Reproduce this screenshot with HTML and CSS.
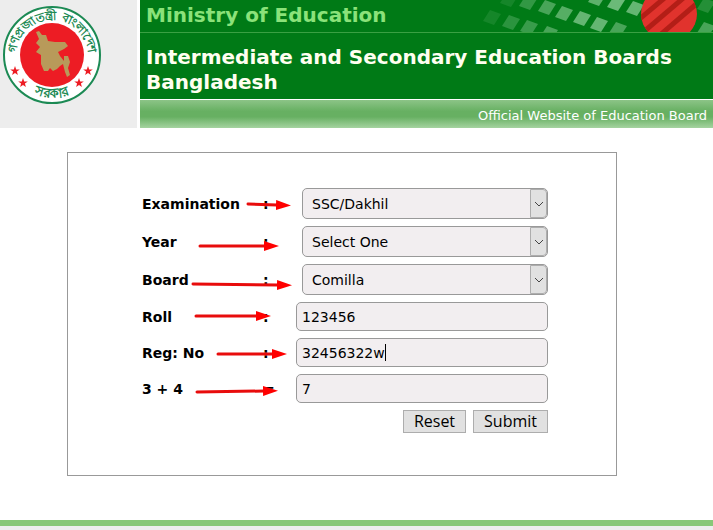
FILE: index.html
```
<!DOCTYPE html>
<html lang="en">
<head>
  <meta charset="UTF-8">
  <meta name="viewport" content="width=device-width, initial-scale=1">
  <title>Intermediate and Secondary Education Boards Bangladesh</title>
  <link rel="stylesheet" href="styles.css">
</head>
<body>

  <!-- HEADER -->
  <header class="header">
    <div class="emblem">
      <svg width="98" height="98" viewBox="0 0 98 98" role="img" aria-label="Government seal of Bangladesh">
        <defs>
          <path id="arc-top" d="M13 60 L13 50 A36 36 0 0 1 85 50 L85 60"/>
          <path id="arc-bottom" d="M14 74 A43 43 0 0 0 84 74"/>
          <path id="star" d="M0 -5 L1.2 -1.6 L4.8 -1.5 L1.9 .6 L2.9 4 L0 2 L-2.9 4 L-1.9 .6 L-4.8 -1.5 L-1.2 -1.6 Z"/>
        </defs>
        <circle cx="49" cy="49" r="48" fill="#fff" stroke="#1c8a54" stroke-width="2"/>
        <circle cx="49" cy="49" r="32" fill="#ed1c24"/>
        <path fill="#b89a5a" d="M33 26 L36 25 L39 29 L43 29 L45 35 L52 36 L62 36 L65 40 L61 43 L55 46 L57 50 L61 55 L61 50 L65 50 L67 56 L65 62 L67 69 L64 71 L62 66 L60 58 L57 60 L54 63 L50 65 L47 62 L45 65 L41 65 L38 58 L38 49 L33 46 L37 41 L33 37 L36 33 Z"/>
        <text class="emblem-text"><textPath href="#arc-top" startOffset="50%" text-anchor="middle">গণপ্রজাতন্ত্রী বাংলাদেশ</textPath></text>
        <text class="emblem-text emblem-text-large"><textPath href="#arc-bottom" startOffset="50%" text-anchor="middle">সরকার</textPath></text>
        <g fill="#ed1c24">
          <use href="#star" x="12" y="65"/>
          <use href="#star" x="20" y="77"/>
          <use href="#star" x="85" y="65"/>
          <use href="#star" x="76" y="77"/>
        </g>
      </svg>
    </div>
    <div class="banner">
      <div class="ministry">
        Ministry of Education
        <svg class="banner-art" width="250" height="32" viewBox="463 0 250 32" aria-hidden="true">
          <defs>
            <path id="tile" d="M-9 4 L-2 -7 L9 -3 L2 8 Z"/>
            <clipPath id="ball"><ellipse cx="669" cy="14" rx="28" ry="27"/></clipPath>
          </defs>
          <g fill="#8fd09a">
            <use href="#tile" x="492" y="17" opacity=".15"/>
            <use href="#tile" x="511" y="22" opacity=".3"/>
            <use href="#tile" x="529" y="27" opacity=".4"/>
            <use href="#tile" x="549" y="33" opacity=".5"/>
            <use href="#tile" x="509" y="-1" opacity=".15"/>
            <use href="#tile" x="528" y="2" opacity=".35"/>
            <use href="#tile" x="547" y="7" opacity=".5"/>
            <use href="#tile" x="564" y="13" opacity=".6"/>
            <use href="#tile" x="582" y="18" opacity=".7"/>
            <use href="#tile" x="599" y="24" opacity=".7"/>
            <use href="#tile" x="618" y="29" opacity=".5"/>
            <use href="#tile" x="597" y="-2" opacity=".65"/>
            <use href="#tile" x="616" y="3" opacity=".75"/>
            <use href="#tile" x="635" y="8" opacity=".7"/>
            <use href="#tile" x="706" y="5" opacity=".25"/>
            <use href="#tile" x="706" y="29" opacity=".5"/>
          </g>
          <g clip-path="url(#ball)">
            <rect x="640" y="-14" width="58" height="56" fill="#e2342e"/>
            <g stroke="#a81a12" stroke-width="5" opacity=".8">
              <path d="M636 22 L680 -15"/>
              <path d="M640 35 L694 -11"/>
              <path d="M660 35 L708 -6"/>
            </g>
          </g>
        </svg>
      </div>
      <h1 class="site-title">Intermediate and Secondary Education Boards Bangladesh</h1>
      <p class="tagline">Official Website of Education Board</p>
    </div>
  </header>

  <!-- RESULT FORM -->
  <main>
    <form class="result-form" action="#" method="post">
      <div class="form-row">
        <label for="exam">Examination</label>
        <span class="sep">:</span>
        <div class="select-box">
          <select id="exam" name="exam"><option>SSC/Dakhil</option></select>
          <span class="select-arrow"><svg width="10" height="6" viewBox="0 0 10 6"><path d="M1 1 L5 5 L9 1"/></svg></span>
        </div>
      </div>
      <div class="form-row">
        <label for="year">Year</label>
        <span class="sep">:</span>
        <div class="select-box">
          <select id="year" name="year"><option>Select One</option></select>
          <span class="select-arrow"><svg width="10" height="6" viewBox="0 0 10 6"><path d="M1 1 L5 5 L9 1"/></svg></span>
        </div>
      </div>
      <div class="form-row">
        <label for="board">Board</label>
        <span class="sep">:</span>
        <div class="select-box">
          <select id="board" name="board"><option>Comilla</option></select>
          <span class="select-arrow"><svg width="10" height="6" viewBox="0 0 10 6"><path d="M1 1 L5 5 L9 1"/></svg></span>
        </div>
      </div>
      <div class="form-row">
        <label for="roll">Roll</label>
        <span class="sep">:</span>
        <div class="input-box">
          <input type="text" id="roll" name="roll" value="123456">
        </div>
      </div>
      <div class="form-row">
        <label for="reg">Reg: No</label>
        <span class="sep">:</span>
        <div class="input-box">
          <input type="text" id="reg" name="reg" value="32456322w">
          <span class="caret"></span>
        </div>
      </div>
      <div class="form-row">
        <label for="sum">3 + 4</label>
        <span class="sep">=</span>
        <div class="input-box">
          <input type="text" id="sum" name="sum" value="7">
        </div>
      </div>
      <div class="form-buttons">
        <button type="reset">Reset</button>
        <button type="submit">Submit</button>
      </div>

      <!-- Red arrows pointing at each field -->
      <svg class="arrows" width="240" height="250" viewBox="68 153 240 250" aria-hidden="true">
        <defs>
          <marker id="head" markerUnits="userSpaceOnUse" markerWidth="15" markerHeight="10" refX="1" refY="5" orient="auto">
            <path d="M0 0 L15 5 L0 10 Z" fill="#f00"/>
          </marker>
        </defs>
        <g class="arrow-lines">
          <path d="M248 204 L277 205"/>
          <path d="M200 246 L265 246"/>
          <path d="M193 284 L278 285"/>
          <path d="M196 316 L257 316"/>
          <path d="M218 354 L273 354"/>
          <path d="M197 392 L264 391"/>
        </g>
      </svg>
    </form>
  </main>

  <footer class="footer"></footer>

</body>
</html>
```
FILE: styles.css
```
* {
  margin: 0;
  padding: 0;
  box-sizing: border-box;
}
body {
  background: #fff;
  color: #000;
  font-family: Verdana, "DejaVu Sans", sans-serif;
  font-size: 14px;
}

/* ---------- HEADER ---------- */
.header {
  display: grid;
  grid-template-columns: 137px 1fr;
  gap: 3px;
}
.emblem {
  background: #ededed;
  padding: 6px 3px;
}
.emblem-text {
  font-size: 12px;
  font-weight: bold;
  fill: #1c8a54;
}
.emblem-text-large {
  font-size: 13px;
}
.banner {
  background: #007a16;
}
.ministry {
  position: relative;
  height: 33px;
  padding: 0 6px;
  border-bottom: 1px solid #3aa043;
  color: #8be27a;
  font-size: 20px;
  font-weight: bold;
  line-height: 30px;
}
.banner-art {
  position: absolute;
  top: 0;
  right: 0;
}
.site-title {
  padding: 12px 6px 4px;
  color: #fffff0;
  font-size: 20px;
  line-height: 25px;
}
.tagline {
  height: 29px;
  padding: 0 6px;
  border-top: 1px solid #fff;
  background: linear-gradient(#8cc487, #67b062 40%, #67b062 60%, #a5d3a0);
  color: #fff;
  font-size: 13px;
  line-height: 31px;
  text-align: right;
}

/* ---------- FORM ---------- */
.result-form {
  position: relative;
  margin: 24px 96px 44px 67px;
  padding: 35px 68px 42px 74px;
  border: 1px solid #999;
}
.form-row {
  display: flex;
  align-items: center;
  margin-bottom: 7px;
}
.form-row label {
  width: 121px;
  font-weight: bold;
}
.sep {
  width: 33px;
  font-weight: bold;
}
.select-box, .input-box {
  position: relative;
  flex: 1;
}
.select-box {
  margin-left: 6px;
}
select, input {
  display: block;
  width: 100%;
  height: 29px;
  padding: 0 5px;
  border: 1px solid #999;
  border-radius: 5px;
  background: #f2eef0;
  color: #000;
  font: inherit;
}
select {
  height: 31px;
  padding: 0 9px;
  appearance: none;
}
.select-arrow {
  position: absolute;
  top: 1px;
  right: 1px;
  bottom: 1px;
  width: 17px;
  display: flex;
  align-items: center;
  justify-content: center;
  border: 1px solid #adadad;
  border-radius: 0 4px 4px 0;
  background: #e1e1e1;
  pointer-events: none;
}
.select-arrow path {
  fill: none;
  stroke: #444;
}
.caret {
  position: absolute;
  top: 6px;
  left: 89px;
  width: 1px;
  height: 17px;
  background: #000;
}
.form-buttons {
  display: flex;
  justify-content: flex-end;
  gap: 7px;
}
button {
  padding: 0 10px;
  border: 1px solid #adadad;
  background: #e1e1e1;
  font: 16px/21px "Open Sans", sans-serif;
}
.arrows {
  position: absolute;
  top: 0;
  left: 0;
  pointer-events: none;
}
.arrow-lines path {
  stroke: #e80c0c;
  stroke-width: 3px;
  stroke-linecap: round;
  marker-end: url(#head);
}

/* ---------- FOOTER ---------- */
.footer {
  height: 10px;
  border-top: 6px solid #88c878;
  background: #eee;
}
```
